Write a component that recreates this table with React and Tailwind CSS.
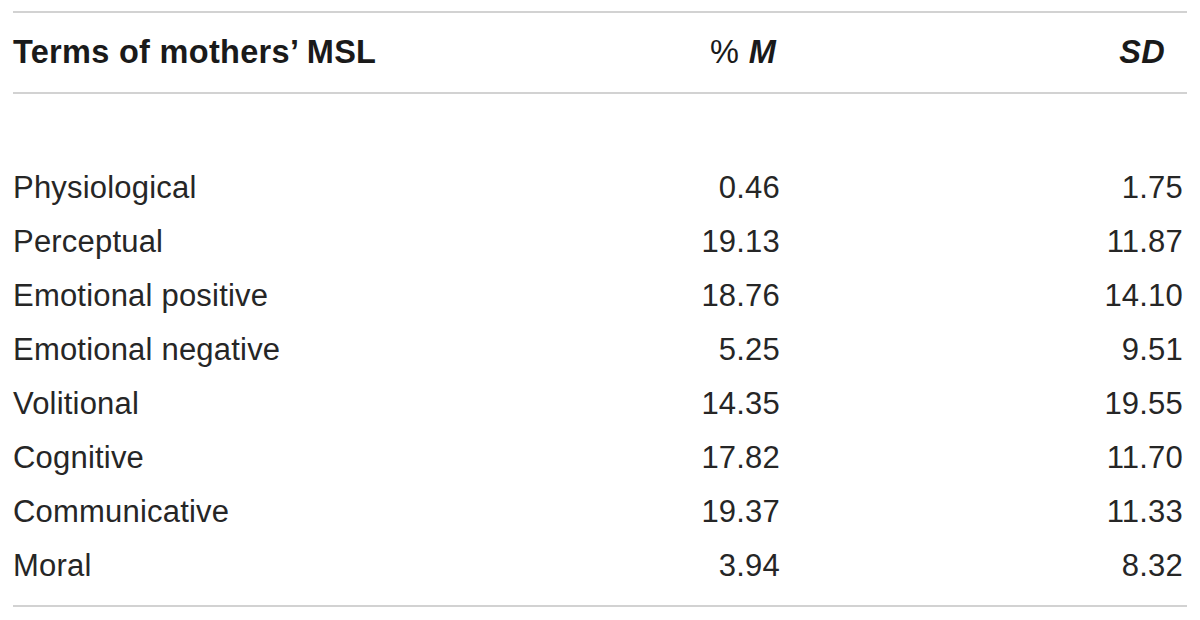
import React from "react";

const rows = [
  ["Physiological", "0.46", "1.75"],
  ["Perceptual", "19.13", "11.87"],
  ["Emotional positive", "18.76", "14.10"],
  ["Emotional negative", "5.25", "9.51"],
  ["Volitional", "14.35", "19.55"],
  ["Cognitive", "17.82", "11.70"],
  ["Communicative", "19.37", "11.33"],
  ["Moral", "3.94", "8.32"],
];

export default function App() {
  return (
    <div className="w-[1200px] h-[620px] bg-white px-[13px] pt-[11px] font-['Liberation_Sans',Arial,sans-serif] text-[#262626]">
      <div className="w-[1174px]">
        <div className="h-[2px] bg-[#d2d2d2]" />
        <div className="flex h-[79px] items-center leading-[79px] text-[32.5px] tracking-[0.3px] font-bold text-[#1a1a1a]">
          <div className="w-[567px]">Terms of mothers’ MSL</div>
          <div className="w-[200px] text-right pr-[4px]">
            <span className="font-normal">%</span> <span className="italic">M</span>
          </div>
          <div className="w-[407px] text-right pr-[22px] italic">SD</div>
        </div>
        <div className="h-[2px] bg-[#d2d2d2]" />
        <div className="pt-[67px] pb-[12px] text-[31px] tracking-[0.2px]">
          {rows.map((r) => (
            <div key={r[0]} className="flex h-[54px] leading-[54px]">
              <div className="w-[567px]">{r[0]}</div>
              <div className="w-[200px] text-right">{r[1]}</div>
              <div className="w-[407px] text-right pr-[4px]">{r[2]}</div>
            </div>
          ))}
        </div>
        <div className="h-[2px] bg-[#d2d2d2]" />
      </div>
    </div>
  );
}
